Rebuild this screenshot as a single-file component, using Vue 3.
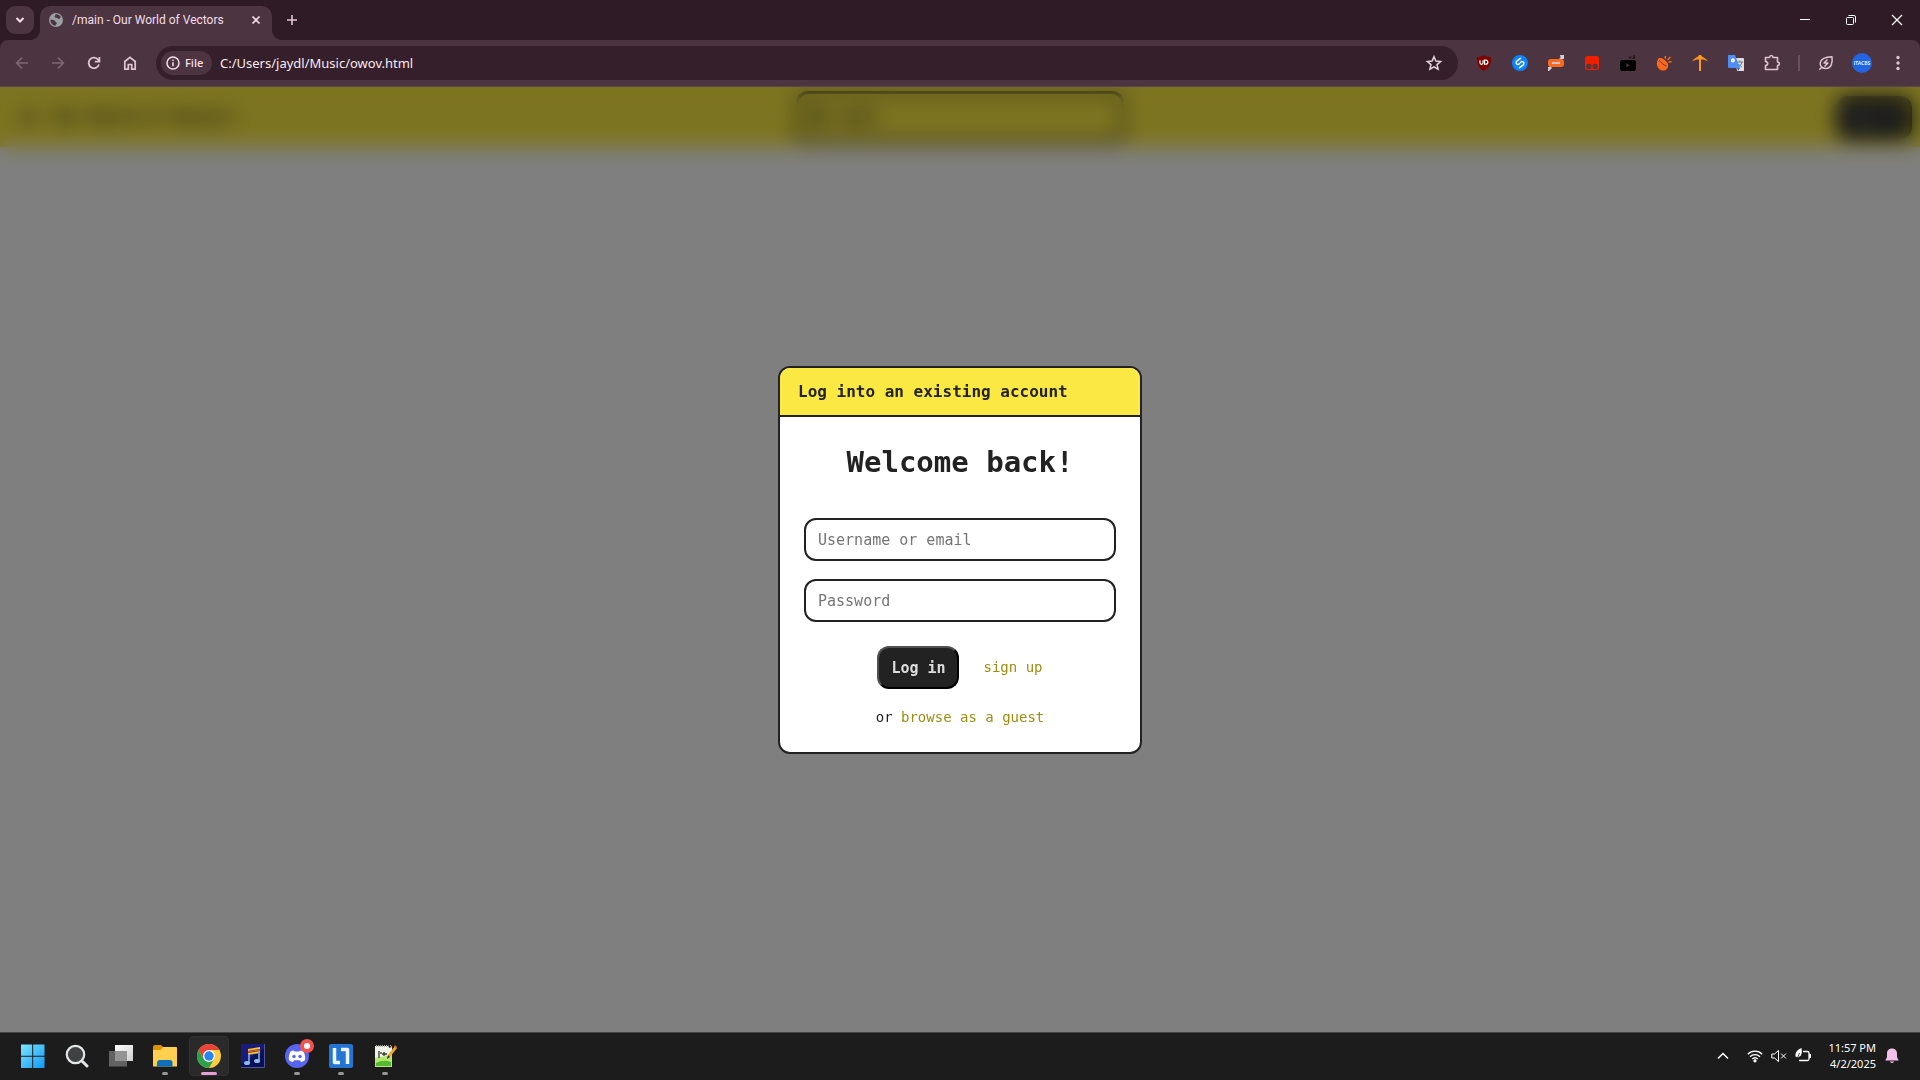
<script setup>
import { ref } from 'vue'

const address = ref('C:/Users/jaydl/Music/owov.html')
const username = ref('')
const password = ref('')
</script>

<template>
  <div class="desktop">
    <header class="tabstrip">
      <button class="tab-search" aria-label="Search tabs">
        <svg width="12" height="12" viewBox="0 0 12 12" fill="none" stroke="#f3dfe8" stroke-width="2"><path d="M2.5 4l3.5 3.5L9.5 4" /></svg>
      </button>
      <div class="tab">
        <svg width="16" height="16" viewBox="0 0 16 16"><circle cx="8" cy="8" r="7" fill="#9aa0a6" /><path d="M2.5 7.500c2 .2 4.200.5 4.700 1.800.4 1 1.800.8 1.600 2.200-.1.900-1.300 1-1.300 2.300C4.500 13.500 2.200 11 2.500 7.500zM7.500 2.300c2-.3 4.500.7 5.500 3-1 .2-1 1.500-2.100 1.700-1.200.2-1.100-1.300-2.400-1.200-1.500.1-2-.8-1.800-1.600.1-.8 1.200-.7.8-1.900z" fill="#4c3440" /></svg>
        <span class="tab-title">/main - Our World of Vectors</span>
        <button class="tab-close" aria-label="Close tab">
          <svg width="10" height="10" viewBox="0 0 10 10" stroke="#f3dfe8" stroke-width="1.7"><path d="M1.500 1.500l7 7M8.500 1.500l-7 7" /></svg>
        </button>
      </div>
      <button class="new-tab" aria-label="New tab">
        <svg width="12" height="12" viewBox="0 0 12 12" stroke="#e2c3d2" stroke-width="1.6"><path d="M6 1v10M1 6h10" /></svg>
      </button>
      <div class="window-controls">
        <button aria-label="Minimize"><svg width="12" height="12" viewBox="0 0 12 12" stroke="#fff"><path d="M1 5.500h10" /></svg></button>
        <button aria-label="Restore"><svg width="12" height="12" viewBox="0 0 12 12" fill="none" stroke="#fff"><rect x="1.500" y="3.500" width="7" height="7" rx="1" /><path d="M3.500 1.500H9q1.500 0 1.500 1.500v5.500" /></svg></button>
        <button aria-label="Close"><svg width="12" height="12" viewBox="0 0 12 12" stroke="#fff" stroke-width="1.2"><path d="M1 1l10 10M11 1L1 11" /></svg></button>
      </div>
    </header>

    <nav class="toolbar">
      <button class="tool" aria-label="Back"><svg width="16" height="16" viewBox="0 0 16 16" fill="none" stroke="#806573" stroke-width="1.7"><path d="M14 8H3M8 2.700L2.700 8 8 13.300" /></svg></button>
      <button class="tool" aria-label="Forward"><svg width="16" height="16" viewBox="0 0 16 16" fill="none" stroke="#806573" stroke-width="1.7"><path d="M2 8h11M8 2.700L13.300 8 8 13.300" /></svg></button>
      <button class="tool" aria-label="Reload"><svg width="16" height="16" viewBox="0 0 16 16" fill="none" stroke="#e2c3d2" stroke-width="1.8"><path d="M13 9.500A5.300 5.300 0 1 1 12.200 4.700L13.300 6M13.400 2v4.700H8.800" /></svg></button>
      <button class="tool" aria-label="Home"><svg width="16" height="16" viewBox="0 0 16 16" fill="none" stroke="#e2c3d2" stroke-width="1.7"><path d="M2.800 6.500L8 2.400l5.200 4.100v7.700H9.700V9.500H6.300v4.700H2.800z" /></svg></button>
      <div class="omnibox">
        <button class="file-chip">
          <svg width="14" height="14" viewBox="0 0 14 14" fill="none" stroke="#f3dfe8" stroke-width="1.5"><circle cx="7" cy="7" r="6" /><path d="M7 6.200v4M7 3.500v1.500" /></svg>
          <span>File</span>
        </button>
        <input v-model="address" class="address" aria-label="Address" />
        <button class="bookmark" aria-label="Bookmark this page"><svg width="18" height="18" viewBox="0 0 18 18" fill="none" stroke="#e4d3dc" stroke-width="1.5"><path d="M9 2.700l1.900 4.400 4.700.4-3.600 3.100 1.100 4.600L9 12.800l-4.100 2.400L6 10.600 2.400 7.500l4.700-.4z" /></svg></button>
      </div>

      <button class="tool" aria-label="Content blocker">
        <svg width="16" height="16" viewBox="0 0 16 16"><path d="M8 .3C6 1.700 3.500 2 1 2c0 5 0 10.500 7 14 7-3.500 7-9 7-14-2.500 0-5-.3-7-1.700z" fill="#800000" /><path d="M4 5.200v2.600c0 2 3 2 3 0V5.200M8.500 5.200v4h1.300a2 2 0 0 0 0-4z" fill="none" stroke="#fff" stroke-width="1.2" /></svg>
      </button>
      <button class="tool" aria-label="Song finder">
        <svg width="16" height="16" viewBox="0 0 16 16"><circle cx="8" cy="8" r="8" fill="#0a84ff" /><path d="M8.500 3.300L5 5.800C3.200 7.300 4.200 9.600 6.300 9.400M7.500 12.700L11 10.200C12.800 8.700 11.800 6.400 9.700 6.600M6.300 9.400L7.700 8.600M9.700 6.600L8.300 7.400" fill="none" stroke="#fff" stroke-width="1.5" stroke-linecap="round" /></svg>
      </button>
      <button class="tool" aria-label="Redirector">
        <svg width="18" height="16" viewBox="0 0 18 16"><path d="M2 14l3-4M12 5l4-4" stroke="#c9c4cc" stroke-width="1.5" /><path d="M13 0h4v4h-3zM1 12h3l1 1-3 3H1z" fill="#d3ced7" /><rect x="1" y="4" width="16" height="8" rx="3" fill="#ff6a1c" /><path d="M5 8h8" stroke="#ccc5ca" stroke-width="2" /></svg>
      </button>
      <button class="tool" aria-label="Script manager">
        <svg width="16" height="16" viewBox="0 0 16 16"><rect x="1" y="1" width="14" height="14" rx="2" fill="#ed2100" /><circle cx="4.800" cy="11.500" r="2.700" fill="#58353d" /><circle cx="11.200" cy="11.500" r="2.700" fill="#58353d" /></svg>
      </button>
      <button class="tool" aria-label="Video enhancer">
        <svg width="16" height="16" viewBox="0 0 16 16"><rect y="5" width="16" height="11" rx="2.500" /><path d="M9 1.500l2 2M11 1.500l-2 2M14 0v3M12.500 3.500l2.500-1" stroke="#000" stroke-width=".8" /><path d="M6.300 8.300v4l3.700-2z" fill="#4c3440" /></svg>
      </button>
      <button class="tool" aria-label="Sun catcher">
        <svg width="16" height="16" viewBox="0 0 16 16"><path d="M2 4.500C-1 9 2 15.500 7 15.500c3 0 5-2 5-4.500z" fill="#ff681b" /><ellipse cx="7" cy="7.700" rx="6.300" ry="3.200" transform="rotate(40 7 7.700)" fill="#ff681b" /><path d="M3.500 5.500c2 2.700 4.300 4.600 7 5.500" fill="none" stroke="#593543" /><path d="M9 3.500l.7-2.500M11.500 5l3-3M12.500 7.300l3-.7" stroke="#ff681b" stroke-width="1.5" /></svg>
      </button>
      <button class="tool" aria-label="Pickaxe">
        <svg width="16" height="16" viewBox="0 0 16 16"><path d="M0 6.500C3 2 6 2.500 7 0h2c1 2.500 4 2 7 6.500-3-1.500-4-2-6.500-2h-3C4 4.500 3 5 0 6.500z" fill="#ff941e" /><path d="M8 1v15" stroke="#ff981e" stroke-width="2" /></svg>
      </button>
      <button class="tool" aria-label="Translate">
        <svg width="16" height="16" viewBox="0 0 16 16"><path d="M7 3h8q1 0 1 1v12H9z" fill="#dedede" /><path d="M9 7h6M12 5.500V7M14 7c-.5 3-2.500 4.500-4 5M10.500 9c1 1.500 2.500 2.500 3.500 3" stroke="#607d8b" fill="none" /><path d="M0 0h7l5 13H1q-1 0-1-1z" fill="#4f8df5" /><path d="M9 13h3l-2 3z" fill="#346acb" /><path d="M7 5H5v1.200h1c-.3 1-2.300 1.200-2.500-.6-.1-1.700 1.400-2.200 2.400-1.400" fill="none" stroke="#fff" stroke-width="1.2" /></svg>
      </button>
      <button class="tool" aria-label="Extensions"><svg width="18" height="18" viewBox="0 0 18 18" fill="none" stroke="#e2c3d2" stroke-width="1.6" stroke-linejoin="round"><path d="M2.500 3.500h4c.3-2.700 3.200-2.700 3.500 0h4.500V8c2.500.3 2.500 3.200 0 3.500v4h-12v-4c3-.4 3-3.600 0-4z" /></svg></button>
      <span class="separator"></span>
      <button class="tool" aria-label="Energy saver"><svg width="16" height="16" viewBox="0 0 16 16" fill="none" stroke="#e2c3d2" stroke-width="1.5" stroke-linejoin="round"><path d="M14 1.800c.8 6.200-.8 11.500-6 11.700C4 13.500 1.800 11 2.200 8 2.900 3.500 7.500 2 14 1.800zM1.300 14.700l2.200-2.200M9.500 4.500L6 8h4l-3.500 3.500" /></svg></button>
      <button class="tool" aria-label="Profile"><span class="avatar">iTACBS</span></button>
      <button class="tool" aria-label="Menu"><svg width="4" height="16" viewBox="0 0 4 16" fill="#e2c3d2"><circle cx="2" cy="2.500" r="1.700" /><circle cx="2" cy="8" r="1.700" /><circle cx="2" cy="13.500" r="1.700" /></svg></button>
    </nav>

    <main class="viewport">
      <div class="site-header" aria-hidden="true">
        <div class="site-brand">
          <svg width="16" height="16" viewBox="0 0 16 16" stroke="#222" stroke-width="2"><path d="M1 3h14M1 8h14M1 13h14" /></svg>
          <strong>Our World of Vectors</strong>
        </div>
        <div class="site-search">
          <svg width="16" height="16" viewBox="0 0 16 16" fill="none" stroke="#222" stroke-width="4"><circle cx="7" cy="7" r="4.500" /><path d="M10 10l5 5" /></svg>
          <strong>main</strong>
        </div>
        <span class="button">Log in</span>
      </div>

      <div class="overlay">
        <form class="dialog" @submit.prevent>
          <h2 class="dialog-title">Log into an existing account</h2>
          <div class="dialog-body">
            <h1>Welcome back!</h1>
            <input v-model="username" class="field" type="text" placeholder="Username or email" aria-label="Username or email" />
            <input v-model="password" class="field" type="password" placeholder="Password" aria-label="Password" />
            <div class="actions">
              <button class="button" type="submit">Log in</button>
              <a href="#signup">sign up</a>
            </div>
            <p>or <a href="#guest">browse as a guest</a></p>
          </div>
        </form>
      </div>
    </main>

    <footer class="taskbar">
      <button class="app" aria-label="Start">
        <svg width="24" height="24" viewBox="0 0 24 24"><defs><linearGradient id="win" x2="1" y2="1"><stop stop-color="#7be6ff" /><stop offset="1" stop-color="#1197f5" /></linearGradient></defs><path d="M0 .500h11.200v11.200H0zM12.200.500h11.300v11.200H12.200zM0 12.700h11.200V24H0zM12.200 12.700h11.300V24H12.200z" fill="url(#win)" /></svg>
      </button>
      <button class="app" aria-label="Search">
        <svg width="24" height="24" viewBox="0 0 24 24" fill="none"><circle cx="10.500" cy="10.500" r="8.700" fill="#3f4143" stroke="#e3e6e7" stroke-width="2.2" /><path d="M17 17l5 5" stroke="#e3e6e7" stroke-width="3" stroke-linecap="round" /></svg>
      </button>
      <button class="app" aria-label="Task view">
        <svg width="24" height="24" viewBox="0 0 24 24"><defs><linearGradient id="pane" x2="1" y2="1"><stop stop-color="#fff" /><stop offset="1" stop-color="#cfcfcf" /></linearGradient></defs><rect x="6" y="1" width="18" height="16" fill="url(#pane)" /><rect y="7" width="18" height="15.500" fill="#626262" /><path d="M6 7h12v10H6z" fill="#949494" /></svg>
      </button>
      <button class="app" aria-label="File Explorer">
        <svg width="24" height="24" viewBox="0 0 24 24"><path d="M0 3q0-2 2-2h6l2 2v4H0z" fill="#dc9408" /><path d="M0 6h8l2-3h13q1 0 1 1v18.500H0z" fill="#ffd04f" /><path d="M4 22.500V19q0-3 3-3h10q2.500 0 2.500 3v3.500z" fill="#0d70bd" /></svg>
        <i class="mark"></i>
      </button>
      <button class="app active" aria-label="Chrome">
        <svg width="24" height="24" viewBox="0 0 24 24"><circle cx="12" cy="12" r="12" fill="#ffcd40" /><path d="M12 6h10.400A12 12 0 0 0 1.600 6l5.200 9z" fill="#e94335" /><path d="M1.600 6A12 12 0 0 0 12 24l5.200-9L12 18 6.800 15z" fill="#2ba24c" /><circle cx="12" cy="12" r="6" fill="#fff" /><circle cx="12" cy="12" r="4.700" fill="#2783ee" /></svg>
        <i class="mark"></i>
      </button>
      <button class="app" aria-label="Music sequencer">
        <svg width="24" height="24" viewBox="0 0 24 24"><rect width="24" height="24" fill="#081058" /><path d="M0 0h24v4L0 20z" fill="#20218b" opacity=".7" /><path d="M7 6l12-2M7 10l12-2" stroke="#f8c52b" stroke-width="1.8" /><path d="M7 8l12-2" stroke="#e55d2c" stroke-width="1.3" /><path d="M8 10v9M18 8v9" stroke="#6fa8df" stroke-width="1.7" /><ellipse cx="6" cy="19" rx="3" ry="2" fill="#91bbec" /><ellipse cx="16" cy="17" rx="3" ry="2" fill="#91bbec" /><path d="M23.500 0v23.500H0" fill="none" stroke="#51549a" /></svg>
      </button>
      <button class="app" aria-label="Discord">
        <svg width="24" height="24" viewBox="0 0 24 24"><circle cx="12" cy="12" r="12" fill="#5865f2" /><path d="M8.500 6.500L10 7.500h4l1.500-1c2 .4 3.300 1 3.500 2 1 2.500 1.500 5 1 7.500-1 1-2.500 1.700-4 2l-1-1.800H9L8 18c-1.500-.3-3-1-4-2-.5-2.500 0-5 1-7.500.2-1 1.500-1.600 3.500-2z" fill="#fff" /><circle cx="9" cy="12.500" r="1.700" fill="#5865f2" /><circle cx="15" cy="12.500" r="1.700" fill="#5865f2" /></svg>
        <i class="badge"></i><i class="mark"></i>
      </button>
      <button class="app" aria-label="Launcher">
        <svg width="24" height="24" viewBox="0 0 24 24" fill="none"><rect width="24" height="24" rx="2" fill="#2474d3" /><path d="M5.500 4v14.500H11M12 5.500h6.500V20" stroke="#eef4fc" stroke-width="3.500" stroke-linejoin="round" /></svg>
        <i class="mark"></i>
      </button>
      <button class="app" aria-label="Notepad++">
        <svg width="24" height="24" viewBox="0 0 24 24"><path d="M2 2h17v21H2z" fill="#f0f2e9" /><path d="M2 14l17-3v12H2z" fill="#b7e96f" /><path d="M3 19q7-4 15-1v4H3z" fill="#55b832" /><path d="M3 2h15" stroke="#a9aaa4" stroke-width="2" stroke-dasharray="1 1" /><path d="M6 7v7M8 8v2M11 8v4M9 10h5" stroke="#323c2d" stroke-width="1.3" /><path d="M14 15l1-4 7-9 2 2-7 9z" fill="#f0a51e" /><path d="M14 15l1-4 2 2zM15 0l4 3-3 1z" fill="#3b2d20" /><path d="M21 3l1-2 2 2-1 1z" fill="#e85c3c" /></svg>
        <i class="mark"></i>
      </button>

      <div class="tray">
        <button class="chevron" aria-label="Hidden icons"><svg width="12" height="12" viewBox="0 0 12 12" fill="none" stroke="#fff" stroke-width="1.5"><path d="M1 8.500l5-5 5 5" /></svg></button>
        <button class="status" aria-label="Network, sound and battery">
          <svg width="16" height="16" viewBox="0 0 16 16" fill="none" stroke="#fff" stroke-width="1.3"><path d="M.8 6.200a10.200 10.200 0 0 1 14.400 0M3 8.700a7.100 7.100 0 0 1 10 0M5.300 11a3.900 3.900 0 0 1 5.400 0" /><circle cx="8" cy="12.800" r="1" fill="#fff" /></svg>
          <svg width="16" height="16" viewBox="0 0 16 16" fill="none" stroke="#fff"><path d="M.8 6h2.700L7.500 2.500v11L3.500 10H.8zM10 5.500l5 5M15 5.500l-5 5" /></svg>
          <svg width="16" height="16" viewBox="0 0 16 16" fill="none" stroke="#fff" stroke-width="1.3"><path d="M8 3.500h4.500q1.500 0 1.500 1.500v6q0 1.500-1.500 1.500H4M15.300 6v4" /><path d="M6.500 0C2 2 0 4.500.5 8.500L3 9.500C6.500 8 7.500 5 6.500 0z" fill="#fff" stroke="none" /><path d="M1.500 12.500L4.500 5" stroke="#1c1c1c" stroke-width=".8" /></svg>
        </button>
        <time class="clock" datetime="2025-04-02T23:57"><span>11:57 PM</span><span>4/2/2025</span></time>
        <button class="bell" aria-label="Notifications"><svg width="16" height="16" viewBox="0 0 16 16" fill="#f4bfe9"><path d="M8 .5c-3.300 0-5 2.300-5 5V9l-1.700 3.500h13.400L13 9V5.500c0-2.700-1.700-5-5-5zM5.800 13.500q2.200 3 4.400 0z" /></svg></button>
      </div>
    </footer>
  </div>
</template>

<style>
body { margin: 0; }
</style>

<style scoped>
.desktop { min-height: 100vh; display: flex; flex-direction: column; background: #2f1b25; font-family: "Noto Sans", "Open Sans", sans-serif; }
.desktop *, .desktop *::before, .desktop *::after { box-sizing: border-box; }
button { margin: 0; padding: 0; border: 0; background: none; font: inherit; color: inherit; }
svg { display: block; flex-shrink: 0; }

.tabstrip { height: 40px; display: flex; align-items: flex-start; padding-left: 6px; color: #f3dfe8; }
.tab-search { width: 28px; height: 28px; margin-top: 6px; border-radius: 9px; background: #4c3440; display: grid; place-items: center; }
.tab { position: relative; width: 232px; height: 34px; margin: 6px 0 0 6px; padding: 0 9px 6px 8px; border-radius: 10px 10px 0 0; background: #4c3440; display: flex; align-items: center; }
.tab::before, .tab::after { content: ""; position: absolute; bottom: 0; width: 10px; height: 10px; }
.tab::before { left: -10px; background: radial-gradient(circle at 0 0, transparent 10px, #4c3440 10px); }
.tab::after { right: -10px; background: radial-gradient(circle at 100% 0, transparent 10px, #4c3440 10px); }
.tab-title { margin-left: 8px; flex: 1; white-space: nowrap; font-family: Roboto, sans-serif; font-size: 12px; }
.tab-close { width: 14px; height: 14px; display: grid; place-items: center; }
.new-tab { width: 28px; height: 28px; margin: 6px 0 0 6px; display: grid; place-items: center; }
.window-controls { margin-left: auto; display: flex; }
.window-controls button { width: 46px; height: 40px; display: grid; place-items: center; }

.toolbar { height: 47px; padding: 0 4px 1px; border-radius: 8px 8px 0 0; border-bottom: 1px solid #5a4450; background: #4c3440; display: flex; align-items: center; }
.tool { width: 36px; height: 34px; display: grid; place-items: center; flex-shrink: 0; }
.omnibox { flex: 1; min-width: 0; height: 34px; margin: 0 8px; padding: 0 15px 0 5px; border-radius: 17px; background: #351f2a; display: flex; align-items: center; }
.file-chip { height: 24px; width: 51px; padding: 0 5px; border-radius: 12px; background: #4c3440; color: #f3dfe8; display: flex; align-items: center; gap: 5px; font-family: "Open Sans", sans-serif; font-size: 11px; font-weight: 600; }
.address { flex: 1; min-width: 0; height: 30px; margin-left: 8px; padding: 0; border: 0; outline: 0; background: none; color: #f8e9f1; font: 13px "Noto Sans", sans-serif; }
.separator { width: 2px; height: 16px; margin: 0 8px; background: #6b5060; }
.avatar { width: 20px; height: 20px; border-radius: 50%; background: #2464e0; color: #d8e6ff; display: grid; place-items: center; font-size: 5px; font-weight: 700; }

.viewport { flex: 1; position: relative; display: flex; flex-direction: column; background: #fff; color: #222; font: 15px/22px "DejaVu Sans Mono", monospace; overflow: hidden; }
.site-header { height: 60px; padding: 0 8px; background: #fbe842; display: grid; grid-template-columns: 1fr 328px 1fr; align-items: center; }
.site-brand { padding-left: 12px; display: flex; align-items: center; gap: 18px; }
.site-search { height: 52px; padding: 0 12px; border: 3px solid #222; border-radius: 12px; display: flex; align-items: center; gap: 14px; }
.site-header .button { justify-self: end; width: 76px; }
.overlay { position: absolute; inset: 0; background: rgba(0, 0, 0, 0.5); backdrop-filter: blur(10px); display: grid; place-items: center; }
.dialog { width: 364px; border: 2px solid #222; border-radius: 12px; background: #fff; overflow: hidden; }
.dialog-title { margin: 0; padding: 13px 18px 12px; border-bottom: 2px solid #222; background: #fbe842; font-size: 16px; line-height: 22px; }
.dialog-body { padding: 24px; display: flex; flex-direction: column; align-items: center; }
h1 { margin: 0 0 35px; font-size: 29px; line-height: 42px; }
.field { width: 100%; height: 43px; margin-bottom: 18px; padding: 2px 12px 0; border: 2px solid #222; border-radius: 12px; background: #fff; color: #222; font: inherit; }
.field::placeholder { color: #757575; opacity: 1; }
.actions { margin-top: 6px; display: flex; align-items: center; gap: 24px; }
.button { width: 82px; height: 43px; padding-top: 2px; border: 2px outset #222; border-color: #505050 #000 #000 #505050; border-radius: 12px; background: #222; color: #ddd; font: bold 15px/22px "DejaVu Sans Mono", monospace; display: grid; place-items: center; }
p { margin: 17px 0 0; font-size: 14px; }
a { color: #9c8e13; font-size: 14px; text-decoration: none; }

.taskbar { height: 48px; padding: 0 20px 2px 11px; border-top: 1px solid #454545; background: #1c1c1c; display: flex; align-items: center; color: #fff; }
.app { position: relative; width: 44px; height: 40px; display: grid; place-items: center; border-radius: 4px; }
.app.active { width: 40px; margin: 0 2px; background: #2a2a2a; border: 1px solid #303030; }
.mark { position: absolute; left: 50%; bottom: 1px; width: 6px; height: 3px; border-radius: 2px; background: #969696; transform: translateX(-50%); }
.active .mark { bottom: 0; width: 16px; background: #e69fd2; }
.badge { position: absolute; top: 3px; right: 5px; width: 14px; height: 14px; border: 4px solid #f15352; border-radius: 50%; background: #fff; }
.tray { margin-left: auto; display: flex; align-items: center; }
.chevron { width: 24px; height: 40px; display: grid; place-items: center; }
.status { display: flex; gap: 8px; margin-left: 12px; }
.clock { width: 57px; margin-left: 8px; display: flex; flex-direction: column; text-align: right; font-size: 11px; line-height: 16px; }
.bell { margin-left: 8px; }
</style>
